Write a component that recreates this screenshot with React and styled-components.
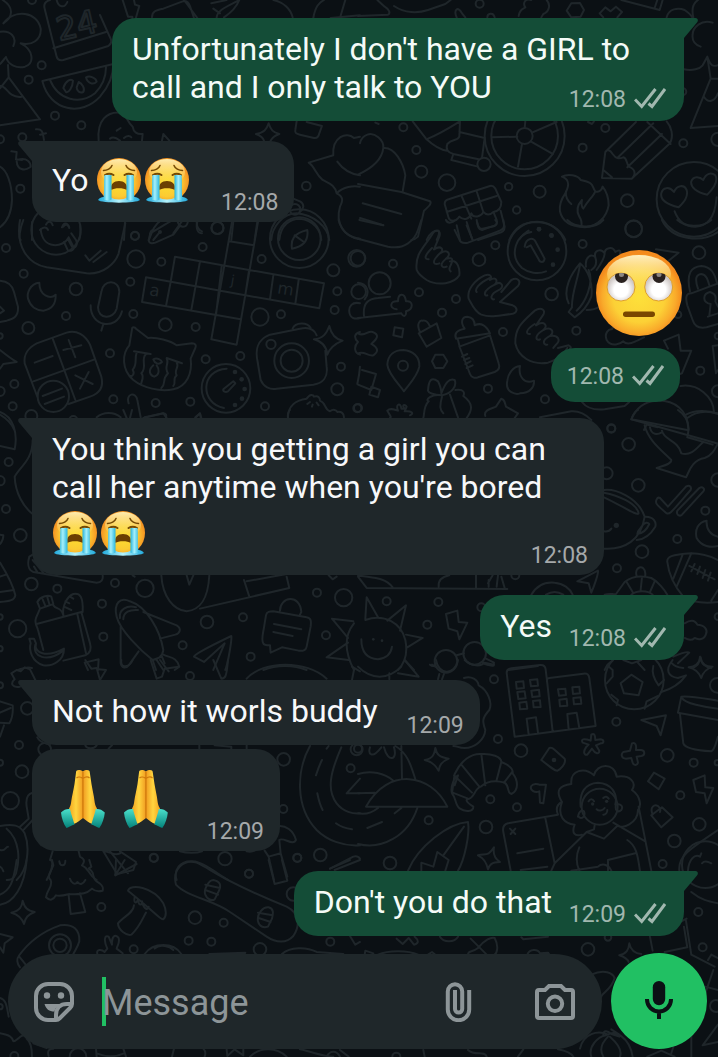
import { useId } from 'react';
import styled, { createGlobalStyle, css } from 'styled-components';

const GlobalStyle = createGlobalStyle`
  *, *::before, *::after {
    box-sizing: border-box;
  }
  body {
    margin: 0;
    background-color: #0b1014;
    font-family: Roboto, 'Liberation Sans', sans-serif;
  }
`;

const Page = styled.main`
  position: relative;
  display: flex;
  flex-direction: column;
  min-height: 100vh;
  overflow: hidden;
  background-color: #0b1014;
`;

const WallpaperSvg = styled.svg`
  position: absolute;
  inset: 0;
  width: 100%;
  height: 100%;
  fill: none;
  stroke: #1f262a;
  stroke-width: 6;
  stroke-linecap: round;
  stroke-linejoin: round;
  text {
    font-family: 'DejaVu Sans', sans-serif;
  }
`;

const Thread = styled.section`
  position: relative;
  flex: 1;
  display: flex;
  flex-direction: column;
  gap: 20px;
  padding: 18px 34px 0 32px;
`;

const Group = styled.div`
  display: flex;
  flex-direction: column;
  align-items: ${({ $out }) => ($out ? 'flex-end' : 'flex-start')};
  gap: ${({ $gap }) => $gap || 4}px;
  width: 100%;
`;

const BubbleBox = styled.article`
  position: relative;
  max-width: calc(100% - 80px);
  padding: 12px 16px 5px 20px;
  border-radius: 24px;
  background-color: #1f272a;
  color: #f7f8fa;

  ${({ $out }) =>
    $out &&
    css`
      padding-right: 18px;
      padding-bottom: 7px;
      background-color: #144d37;
      color: #f4fbf7;
    `}
  ${({ $tail, $out }) => $tail && ($out ? 'border-top-right-radius: 0;' : 'border-top-left-radius: 0;')}
`;

const TailSvg = styled.svg`
  position: absolute;
  top: 0;
  width: 15px;
  height: 22px;
  ${({ $out }) =>
    $out ? 'right: -14px; fill: #144d37;' : 'left: -14px; fill: #1f272a; transform: scaleX(-1);'}
`;

const Text = styled.p`
  margin: 0;
  font-size: 32px;
  line-height: 38px;
`;

// keeps room on the last line for the time stamp
const Spacer = styled.span`
  display: inline-block;
  width: ${({ $out }) => ($out ? 114 : 86)}px;
  height: 1px;
`;

const Meta = styled.footer`
  display: flex;
  justify-content: flex-end;
  align-items: center;
  gap: 8px;
  margin-top: ${({ $out }) => ($out ? -20 : -18)}px;
  font-size: 23px;
  line-height: 28px;
  color: ${({ $out }) => ($out ? '#a1b8af' : '#a5a9aa')};
`;

const Pill = styled.div`
  margin-right: 4px;
  padding: 35px 16px 11px;
  border-radius: 24px;
  background-color: #144d37;
`;

const CheckSvg = styled.svg`
  width: 32px;
  height: 24px;
  fill: none;
  stroke: currentColor;
  stroke-width: 3;
`;

const InlineEmoji = styled.svg`
  width: 48px;
  height: 54px;
  vertical-align: -16px;
`;

const HandsEmoji = styled.svg`
  width: 63px;
  height: 75px;
  vertical-align: -24px;
`;

const BigEmoji = styled.svg`
  width: 90px;
  height: 98px;
`;

const Composer = styled.form`
  position: relative;
  display: flex;
  align-items: flex-end;
  gap: 9px;
  padding: 15px 11px 8px 8px;
`;

const Field = styled.div`
  flex: 1;
  min-width: 0;
  display: flex;
  align-items: center;
  height: 95px;
  padding: 0 27px 0 26px;
  border-radius: 48px;
  background-color: #1f272a;
`;

const MessageInput = styled.input`
  flex: 1;
  min-width: 0;
  height: 49px;
  margin: 0 28px;
  padding: 2px 0 0;
  border: 0;
  outline: 0;
  background: linear-gradient(#21c063, #21c063) left center / 4px 49px no-repeat;
  color: #f7f8fa;
  font-family: inherit;
  font-size: 36px;
  line-height: 42px;
  &::placeholder {
    color: #8d9598;
    opacity: 1;
  }
`;

const Actions = styled.div`
  display: flex;
  gap: 57px;
`;

const IconButton = styled.button`
  display: flex;
  padding: 0;
  border: 0;
  background: none;
  color: #8d9598;
  cursor: pointer;
  svg {
    width: 40px;
    height: 40px;
    fill: none;
    stroke: currentColor;
    stroke-width: 4;
  }
`;

const MicButton = styled(IconButton)`
  justify-content: center;
  align-items: center;
  width: 96px;
  height: 96px;
  border-radius: 50%;
  background-color: #21c063;
  color: #0b1014;
`;

// every tile is drawn at three times its size on the page
const tiles = [
  {
    x: 0,
    y: 0,
    dots: [[125, 196, 12], [86, 239, 12], [165, 347, 12], [244, 376, 12], [67, 412, 12], [61, 566, 12], [405, 708, 12], [0, 418, 12], [919, 558, 13], [885, 628, 16], [652, 684, 18], [96, 0, 12], [168, 690, 74]],
    paths: [
      'M8 0C40 20 42 50 10 70C45 25 112 35 122 85C125 120 95 138 62 130C100 148 105 190 75 200C50 206 25 195 18 172M0 95C32 90 52 112 40 138',
      'M18 172C10 180 5 188 0 192M24 195L26 232L120 358L0 376M26 232L0 265M0 258C15 256 20 275 35 284C45 290 55 292 65 290',
      'M170 0C175 22 194 26 202 6M150 0C136 4 130 12 134 26L170 170C173 180 182 182 190 180L325 138C334 132 336 122 330 112L300 45M160 145L318 96',
      'M127 243C150 335 245 350 300 290C330 255 340 222 340 192ZM150 240C175 302 240 315 285 280C310 255 318 230 318 202',
      'M190 264C196 242 214 234 219 242C218 262 206 280 198 276ZM236 246C246 250 256 266 250 276C240 280 230 274 230 262ZM258 232C270 226 288 234 290 245C280 256 262 250 258 232Z',
      'M368 0L384 50H397L400 80L418 18L405 14L402 0',
      'M456 52C456 34 468 30 490 26L548 4C560 0 566 8 570 18L582 54M552 0L592 54M634 10L680 0M650 52C652 30 680 20 718 0C708 26 690 40 672 52M640 26L660 40',
      'M820 0C850 6 872 26 878 52M940 54C946 18 958 8 972 0M992 54L1080 46M1020 54L1036 0',
      'M296 422C290 360 322 334 362 338C380 342 378 362 398 380C400 396 412 404 428 402L426 422M330 416C340 408 350 414 360 422M372 414C380 406 390 406 394 412M350 392L362 384',
      'M486 422L490 402L508 422M768 402C792 398 800 388 806 370C812 390 820 398 838 402C820 408 815 416 812 422M768 402C785 408 790 414 792 422',
      'M890 364L886 390C884 400 890 402 900 404L942 414C952 416 956 410 958 400L966 378L920 366',
      'M1000 466C996 410 1040 394 1062 414L1080 410M1000 466L926 488C945 500 945 520 968 540C985 550 1004 552 1010 580M1010 580C1030 560 1060 556 1080 560M1010 580C1030 590 1030 600 1020 620C1006 670 1030 710 1080 718M1012 485C1030 510 1050 522 1080 526',
      'M0 500C20 510 36 550 36 600C34 650 16 670 0 682M34 454L50 456L48 478L66 480M60 478C80 474 92 486 92 500M50 484C52 510 74 514 90 502M108 388C130 386 128 400 132 420M120 404L138 400',
      'M70 660C58 690 56 720 62 720M96 666V720M240 674C244 700 240 712 238 718M120 690C130 680 140 680 144 690M190 680C196 672 206 672 208 684',
      'M375 665L372 720M450 700C470 690 500 670 510 665M446 720C452 700 450 690 460 690M545 665L520 700M592 665C586 690 596 700 606 700M700 665L694 720M772 665L764 720M814 720C816 680 850 640 890 640C940 644 984 680 988 720M838 720C842 676 870 656 900 656C940 660 962 690 964 720M880 596L900 604C916 612 910 630 900 636',
    ],
    texts: [{ at: 'translate(178 122) rotate(-13)', size: 96, value: '24', outline: true }],
  },
  {
    x: 358,
    y: 0,
    dots: [[365, 11, 12], [136, 382, 12], [175, 450, 12], [190, 515, 18], [267, 548, 25], [452, 560, 11], [545, 575, 18], [476, 630, 11], [674, 443, 12], [742, 384, 12], [808, 602, 19], [827, 687, 25], [976, 430, 12], [1080, 418, 20], [500, 408, 24], [500, 408, 100], [500, 408, 120], [378, 493, 20], [1008, 598, 112], [975, 275, 10]],
    paths: [
      'M0 48L90 44C98 40 94 28 80 20L58 0M108 18C140 40 180 40 210 30L262 12L278 0M52 368L62 372',
      'M296 52C286 30 300 16 312 40L322 52M388 52C388 40 406 36 410 52M482 48C484 28 496 26 502 22C492 8 504 -6 520 0M566 0C580 16 572 36 556 42C552 48 550 52 550 52M640 10L666 9L678 30L668 50L640 52L626 32Z',
      'M725 40L742 22L758 34L774 20L792 36L778 52M725 40L736 52M790 0L905 30L914 0M890 24L898 0M926 52C932 26 960 22 980 30C992 38 1000 46 1004 54M1006 52C1000 26 1008 8 1020 0M1064 68C1030 56 1004 84 1004 104C1002 120 1010 134 1028 140M978 208C1004 214 1026 206 1034 196L1048 170C1058 200 1066 200 1080 196M1048 170L1058 236H1080M1058 236L998 384L1080 378M1038 290C1050 310 1070 306 1080 280',
      'M164 364L204 416C230 440 250 450 268 452M210 416C250 400 280 380 306 364M306 364L304 410C298 424 282 416 268 432C262 448 270 458 286 462M304 396L380 414M286 462L280 480L360 500M286 462L362 478M380 414L372 474',
      'M402 412L478 410M500 384L502 364M522 398L596 366M518 424L584 462M492 432L480 500',
      'M690 366L702 372L708 364M742 456L834 366M778 474L886 370M808 502L912 402M834 524L936 430C948 406 940 380 926 364M868 366L938 432M742 456L732 534L822 536L834 524M742 456C746 448 756 448 764 462C774 476 782 478 796 472C806 474 804 484 812 500C830 506 836 520 822 536M736 510L762 532',
      'M0 524C40 506 72 480 76 444C78 420 50 396 28 404C16 408 8 420 6 430M76 444C110 440 136 490 142 526L134 574',
      'M0 552L130 576L216 604C222 610 214 618 198 632L180 710C170 720 164 720 160 720M14 610L130 642M6 654L76 676M206 720C214 700 230 690 242 692C246 700 240 712 236 720',
      'M260 612C260 604 264 600 272 598L396 558C404 556 408 560 412 566L430 606C430 624 420 634 406 636C396 646 384 646 376 636C370 650 346 656 340 640C336 656 318 664 304 650C292 668 276 664 272 654ZM266 636L416 588M310 586L340 656M356 574L376 636M296 676L306 720M326 666L342 716M408 640L416 660C420 674 412 678 400 680L372 690C362 690 360 680 358 668M428 632L440 680C440 694 430 698 420 700L360 720',
      'M612 530C640 540 630 564 622 580C608 600 604 620 606 634C612 664 640 680 680 682C720 680 746 650 752 616C752 590 742 570 734 560C730 574 720 578 712 574C700 560 712 548 668 540C660 526 630 520 612 530ZM640 612C626 600 622 590 624 574M712 574C706 590 690 600 676 626C672 622 670 610 672 600C654 620 656 636 664 650C670 658 672 668 670 680',
      'M962 622C930 614 906 600 910 580C914 562 934 558 948 576C956 556 978 552 986 570C992 590 978 606 962 622ZM1048 584C1018 578 996 562 1000 544C1006 528 1024 528 1036 540C1044 520 1060 516 1072 526C1080 540 1070 562 1048 584ZM950 634C964 672 990 680 1012 680C1046 678 1070 660 1076 592',
      'M454 720C470 680 500 666 536 666C580 668 610 690 622 720M484 718C496 700 504 698 512 692',
    ],
    fills: [[543, 688, 7], [580, 706, 7]],
  },
  {
    x: 0,
    y: 220,
    dots: [[18, 84, 12], [71, 161, 12], [405, 47, 12], [408, 117, 26], [484, 125, 12], [608, 81, 12], [653, 24, 18], [391, 185, 12], [228, 207, 19], [198, 288, 12], [85, 324, 18], [400, 282, 12], [496, 314, 19], [587, 321, 12], [785, 117, 12], [780, 291, 26], [843, 283, 12], [1000, 151, 18], [1012, 214, 12], [1004, 270, 12], [1070, 115, 25], [1076, 215, 22], [330, 400, 12], [43, 492, 12], [38, 559, 12], [340, 538, 12], [467, 549, 12], [571, 545, 12], [617, 418, 12], [721, 408, 12], [795, 559, 12], [1023, 440, 12], [1012, 508, 18], [1072, 565, 12], [0, 514, 14], [94, 588, 18], [678, 505, 73], [160, 529, 47], [875, 422, 52], [875, 422, 33], [813, 373, 14], [898, 56, 88], [898, 56, 64], [0, 348, 8], [220, 600, 12]],
    paths: [
      'M60 0C46 80 84 132 140 142L260 160C310 164 346 130 356 100L376 10M122 28C128 90 190 84 206 52M206 52L222 84C232 78 232 70 228 60L214 40M192 66L204 92C214 94 220 88 222 84M204 58L216 80M138 14C144 2 154 2 158 16M186 22C192 6 202 8 206 20',
      'M256 106L268 122L302 92M280 126L320 96',
      'M446 62C458 30 462 16 484 0M446 62C448 72 460 70 466 68L520 44L538 20M460 60L478 38M532 0C536 26 560 26 564 4M590 6C590 20 596 30 606 34',
      'M118 188C90 190 80 220 84 236C92 262 112 272 130 272C156 268 168 250 167 224C150 240 118 226 118 188Z',
      'M304 216C308 178 358 176 358 216L350 266C340 300 294 298 294 262ZM272 256C270 320 350 334 366 274M310 312L304 332',
      'M696 6L634 358L710 374L774 6M688 64L762 76M525 110L972 190L958 265L736 226L747 152M525 110L512 186M600 124L574 270M438 172L736 226M438 172L426 246L722 298M512 186L498 258M665 138L648 286M820 166L810 238M896 180L886 252',
      'M878 326C886 306 922 306 932 324M876 86C872 60 880 40 922 30C926 60 910 80 876 86ZM884 46L912 66',
      'M74 430C70 400 90 380 110 370L200 338C230 328 256 346 270 374L304 470C312 500 298 520 270 530L206 552M74 430L102 504L112 530M158 356L226 540M100 484L284 418M104 428L158 408M190 390L244 376M206 360L226 412M226 466L278 492M266 456L240 506M128 528L186 506M134 552L192 530',
      'M396 328C396 320 404 320 410 328L444 354C470 352 510 360 530 376L576 370C586 370 590 376 586 384L572 416C578 460 560 500 520 508C480 516 430 504 400 480C364 450 366 400 388 376ZM402 394L452 402M500 414L546 430M410 398C402 420 414 430 398 450C406 462 396 470 390 468M438 402C420 420 444 440 424 460C434 470 424 484 424 490M500 416C510 430 490 440 504 460C484 480 500 490 484 504M530 428C540 440 520 450 530 466C516 476 530 486 520 498M460 418C472 412 484 420 486 426C476 436 464 430 460 418ZM460 436C444 450 448 466 462 470C480 466 478 446 470 436',
      'M680 446C600 450 600 550 672 564M670 508L700 484L706 490L684 514C676 518 668 514 670 508Z',
      'M774 430C764 390 770 360 810 344L900 326C930 320 944 330 950 346M772 420L782 480C790 500 810 510 830 506L940 494C970 490 984 470 980 440L976 392M942 358C970 356 980 340 988 318C994 344 1006 358 1028 362C1008 370 990 382 982 404C980 380 964 364 942 358Z',
      'M386 550C376 520 408 514 412 540L422 592M434 592L490 580C498 580 500 586 498 592M290 592C310 576 340 574 362 592M586 592L600 580L602 592M864 592C864 556 890 540 920 536C930 520 940 524 942 530C956 526 960 534 960 542C980 550 970 566 990 574C1000 566 1010 570 1012 576C1024 574 1032 580 1032 592M922 552L930 546M938 554L936 560M950 548L956 556',
      'M0 182C30 184 38 200 42 216L54 260C56 290 40 296 20 302L0 306M0 260L12 272L0 280M0 390C20 406 36 418 50 426L10 432L0 446M0 584C20 596 34 610 42 628',
      'M1016 0C1024 30 1046 52 1080 56M1080 250C1056 244 1046 260 1048 276C1050 296 1066 298 1080 294M1080 336C1064 340 1060 352 1074 366C1060 380 1064 400 1080 404M1080 440C1078 470 1072 490 1072 492',
    ],
    fills: [[705, 456, 7], [725, 478, 7], [734, 507, 7], [726, 536, 7], [705, 555, 7], [480, 36, 6]],
    texts: [
      { at: 'translate(446 226) rotate(9)', size: 50, value: 'a' },
      { at: 'translate(690 194) rotate(9)', size: 42, value: 'j' },
      { at: 'translate(830 220) rotate(9)', size: 50, value: 'm' },
    ],
  },
  {
    x: 358,
    y: 220,
    dots: [[0, 115, 22], [105, 131, 12], [412, 76, 12], [363, 119, 19], [183, 217, 12], [65, 190, 33], [294, 237, 12], [252, 278, 12], [435, 336, 12], [674, 72, 12], [827, 26, 25], [1023, 98, 19], [581, 222, 19], [655, 332, 12], [390, 506, 12], [561, 538, 12], [1027, 452, 12], [760, 626, 12], [1080, 514, 18], [1080, 348, 10], [135, 437, 15], [537, 93, 88], [0, 564, 12], [960, 284, 10]],
    paths: [
      'M0 56L90 80C140 90 170 60 180 30L190 0M4 0L76 16M0 188C30 190 36 220 20 238M0 294L130 280C136 292 146 290 144 274C168 268 166 240 144 244C140 216 120 220 120 244C96 240 92 266 116 268M18 288C14 250 30 236 60 234L96 230',
      'M176 150C170 100 200 80 222 44C232 24 250 32 244 50L228 88M222 84C196 110 200 118 212 118M228 88C250 74 260 90 246 100C214 130 232 136 244 130M246 100C270 84 282 104 264 116C240 136 254 146 266 140M264 116C290 110 284 124 276 140C272 150 278 154 278 154M276 124C300 116 306 150 304 166C290 190 240 200 206 180C190 170 180 160 176 150',
      'M332 236C326 210 350 180 380 166C396 160 404 170 396 180M396 174C360 190 350 210 356 216M396 180C416 168 420 184 410 194C370 214 380 230 388 226M410 194C430 180 440 200 426 208C390 224 400 240 408 238M430 216L460 180C480 170 490 184 480 198L426 246L464 256C482 264 478 280 460 282C420 286 400 294 370 284C350 276 340 250 332 236',
      'M472 370C470 320 500 300 530 272C550 260 564 270 556 284L534 316M530 312C500 330 504 344 516 342M534 316C560 300 572 318 556 330C524 350 536 364 546 358M556 330C580 318 592 336 576 348C546 364 560 376 568 374M576 348C600 344 610 360 594 374L586 384M600 384L632 376C640 380 640 384 636 386M472 370C480 410 520 436 570 428C600 420 620 400 628 384',
      'M294 356C288 342 296 330 320 326C306 306 312 290 328 290C346 292 350 306 350 316C370 306 386 318 396 340ZM304 380L396 346M300 360L306 384L336 462C340 472 350 476 360 472L410 456C424 450 426 440 422 430L396 346M312 410L328 402M318 420L334 414M322 432L338 424M326 444L344 436',
      'M182 340L236 310L250 354L206 380ZM186 336C174 310 186 300 194 302C204 300 212 310 216 320M110 322L136 326L132 352L106 346ZM0 340C20 352 30 330 44 336C64 344 60 354 40 372C64 386 60 396 46 406C30 410 20 392 0 400M12 450L54 462L40 510L0 494M40 500L66 510L60 532L34 524Z',
      'M138 514C120 490 90 460 88 434C90 404 110 390 136 390C164 392 186 410 184 440C178 470 150 496 138 514ZM222 424L232 404L256 404L268 424L256 444H232Z',
      'M264 0C270 14 286 6 290 2M290 30L304 58C308 70 320 70 330 68L420 34C440 28 440 20 436 0M326 16L344 60M356 0C360 30 370 28 384 24L410 18C420 10 416 4 412 0M628 0C650 22 710 30 736 0M912 0C940 60 1030 70 1080 36M958 0C980 20 1030 26 1060 0',
      'M520 36C476 40 450 104 492 144C510 158 540 164 564 154M500 80C504 50 530 54 532 64L560 116C558 130 546 128 542 118L518 76L506 82',
      'M210 512C212 480 220 470 240 484C244 492 250 510 250 520C262 490 272 474 290 480C298 500 280 520 252 526C230 524 212 520 210 512ZM252 526C220 520 200 540 212 544C196 560 200 580 196 594M252 530C244 560 246 570 256 580M276 524L300 592M292 510C320 506 320 520 316 528C346 550 344 570 326 594M88 572C96 564 106 568 120 572C112 552 128 546 130 566L140 566C130 556 140 550 146 560L140 574C160 572 170 580 156 586M88 572C100 592 100 592 96 594M382 588C376 570 400 566 414 560L430 536C440 540 440 546 444 560L480 580L470 594',
      'M632 250C612 210 640 160 666 130C690 150 706 190 700 230C688 262 668 280 650 292L632 276L642 262M666 134C660 180 640 220 642 262M692 150C710 190 680 250 656 272M684 140C680 110 700 100 712 112C706 90 730 84 740 100C740 84 764 76 772 96C784 88 790 92 786 100M700 150C716 140 716 124 712 112M716 150C730 130 740 110 740 100M686 270C720 270 744 250 740 240',
      'M448 482C440 520 476 524 486 520C516 520 530 500 528 482C500 494 480 470 486 438C466 440 450 460 448 482Z',
      'M894 88L962 98L930 124M1000 220C980 220 984 240 988 256L1004 300C1010 320 1026 326 1046 322L1080 312M1000 220L1080 190M996 214C984 160 1000 140 1030 138C1060 140 1070 160 1078 192M1020 206C1010 176 1014 164 1030 162C1046 164 1050 180 1054 196M1050 290L1080 280M1054 288L1058 252C1030 246 1036 220 1056 216C1070 220 1076 230 1072 244L1080 260',
      'M746 360C738 340 752 326 762 328C764 316 780 318 786 326M746 360C760 384 790 370 796 364C810 380 830 364 838 362L858 352M918 362L962 344L968 392L1000 392L972 460L966 462M918 362L930 386M1064 378L1080 376M1064 378L1074 460L1080 450',
      'M672 546C690 570 720 570 740 568L800 558L814 546M546 592L640 574C670 572 690 590 700 600M820 598C836 560 860 544 896 542M820 598L988 630M896 542C950 540 990 570 992 630M968 498C1020 490 1066 530 1068 576M988 594C1010 576 1040 570 1080 580M858 630L866 614L900 622',
    ],
    fills: [[543, 27, 7], [581, 47, 7], [599, 89, 7], [585, 134, 7]],
  },
  {
    x: 0,
    y: 410,
    dots: [[26, 156, 12], [0, 212, 14], [18, 297, 12], [61, 376, 19], [94, 522, 19], [172, 536, 12], [345, 519, 12], [435, 535, 26], [306, 581, 12], [53, 656, 26], [310, 680, 12], [621, 636, 19], [729, 622, 12], [548, 706, 12], [752, 740, 12], [951, 548, 12], [1031, 563, 26], [978, 676, 12], [0, 621, 8], [0, 716, 8]],
    paths: [
      'M0 6C40 20 54 70 44 118L0 108M98 90C98 150 60 170 44 200C46 250 70 290 98 312M0 374L10 376C10 390 6 396 0 402M88 440C82 460 84 480 100 486L290 518C304 518 310 510 308 496M88 440L98 434M112 486L102 470M132 490L98 450M0 458C20 490 40 530 46 556C44 570 30 574 0 576M0 500L18 494M0 546L42 540',
      'M112 576L120 596L160 582L154 560C144 554 120 560 112 576ZM128 568L136 588M142 562L148 582M120 596L108 624C102 640 112 650 114 660L130 720M160 586C170 600 184 590 190 616M110 642L244 606L270 700C276 720 270 730 256 736L190 752M232 612L258 730M190 616C186 590 200 560 220 552C240 548 250 560 248 606M196 574L208 580M192 590L214 600M210 560L220 566',
      'M88 686L102 686L108 700C100 730 140 744 192 716C192 750 160 770 130 766C96 756 86 720 92 700ZM106 704C96 740 140 760 190 722',
      'M350 620C340 580 360 560 390 574C440 590 480 660 490 720C488 740 470 750 458 750C420 720 360 660 350 620ZM360 624C356 600 380 584 408 592M370 628C370 606 390 598 414 600M430 606L530 646C546 656 540 670 526 674L480 686M362 650L362 760C366 776 378 776 386 766L416 724M458 750L468 780M458 750L486 740L494 760M490 734C510 744 530 740 538 770L524 780M470 750L490 780M254 758L296 748L294 780M254 758L264 780M54 780C66 776 76 770 96 774',
      'M484 496C488 560 520 600 560 604C600 600 624 570 628 496M600 596L868 534L860 500M732 510L748 560M740 514L860 492M560 496L568 524L580 496M398 496L404 500M986 496L998 508L1010 500',
      'M582 740C584 730 690 680 694 678C696 690 684 760 676 780M582 740L612 756L674 700L640 780M790 700C782 690 790 670 794 640L798 616C800 604 810 604 820 604L920 622C934 624 934 634 932 650L920 710C918 722 908 724 896 722L846 712L812 728L810 706C800 706 792 706 790 700ZM840 602C840 560 900 550 904 606L900 614M822 642L904 658M820 666L878 678',
      'M996 626L1060 634M996 626L1044 684M980 742L1044 698M980 742L1046 750M1062 640C1030 680 1036 730 1062 780M790 780C830 764 880 764 920 780M390 24L396 0M430 24L490 10L500 24M864 24C862 10 868 0 870 0M370 0L380 24M586 24L600 10L604 24',
    ],
  },
  {
    x: 358,
    y: 410,
    dots: [[760, 55, 12], [812, 103, 19], [746, 190, 18], [841, 226, 19], [1042, 302, 12], [958, 387, 12], [852, 425, 19], [777, 475, 12], [86, 574, 12], [241, 576, 12], [208, 644, 12], [370, 592, 12], [472, 496, 12], [1080, 210, 20], [1080, 620, 10], [350, 730, 34], [264, 754, 34]],
    paths: [
      'M820 28L1076 100M820 28C826 10 836 0 840 0M960 0C990 20 996 50 988 82M984 14C1010 0 1050 0 1080 12M860 46C870 90 910 120 940 150C940 164 910 168 896 174L984 202C992 190 1000 150 1040 144C1060 138 1070 120 1080 100M876 52C880 76 900 74 910 68M912 62C916 90 960 90 970 130M970 130C1000 140 1020 110 1036 96M988 82L1064 104',
      'M738 240C770 236 840 260 860 320C850 390 800 420 738 416M738 262C790 286 840 320 842 310C836 280 780 256 738 248M864 320C886 320 896 336 892 350C880 370 860 388 836 390M852 348C860 336 870 336 874 342C866 360 856 370 838 372C838 360 846 360 852 348ZM738 364C748 366 756 362 760 356',
      'M896 268C890 280 896 284 926 310C936 314 940 306 998 240C1002 230 994 224 984 230L930 290L906 264C902 262 898 264 896 268ZM960 300L1024 234C1034 228 1042 236 1036 244L972 314C962 322 952 310 960 300Z',
      'M1046 332C1020 336 1010 360 1016 384C1030 410 1060 414 1080 408M1046 332C1044 360 1060 376 1080 380M928 456C926 440 940 434 1000 430C1030 430 1060 440 1080 450M928 456C932 490 950 530 976 560C1000 576 1030 582 1080 576M974 434L946 506M1000 430L956 530M994 468L1070 508M1010 462L1000 484M1026 470L1018 492M1042 480L1034 504M1058 488L1050 512M1080 540L1060 572',
      'M658 514L720 482C722 490 708 530 700 548L692 520ZM520 554C540 520 570 516 590 518C616 520 636 536 644 554M564 554C580 544 600 544 616 554M740 554C756 550 766 554 774 552L800 516C820 500 850 496 880 504C900 514 920 540 928 554M806 516L824 546M852 502L848 540M890 514L876 546M820 554C836 540 870 540 884 554M836 500C826 470 860 460 862 490L862 500',
      'M0 500L26 534L448 537M0 496C40 504 80 500 104 532M242 530C240 510 254 500 274 496M354 496V534M392 510V530M416 530L420 496M404 496L390 520M440 534L430 500',
      'M22 626L26 562L60 622M88 632L144 586L126 662M144 674L194 684L148 712M140 750L168 780M22 630C80 610 130 640 142 690C150 730 140 760 120 780M10 688C10 720 20 746 60 748C90 744 100 726 102 710M264 612L298 602L302 636L328 638L304 688L298 664L272 656ZM296 736L318 730M384 746L408 758C408 768 400 768 380 762M222 764L232 770M452 780L540 768',
      'M980 640C996 630 1010 628 1018 644C1040 644 1050 660 1044 672C1040 690 1020 690 1010 684C1000 694 990 690 980 684M946 740C970 730 990 724 994 728L960 760M1026 740C1024 764 1016 770 1000 774M1026 740C1032 764 1040 770 1060 774M740 780C746 766 756 756 764 752M838 756L860 780',
    ],
    fills: [[775, 346, 8], [46, 688, 4], [72, 692, 4]],
  },
  {
    x: 0,
    y: 660,
    dots: [[82, 145, 19], [570, 48, 12], [57, 255, 12], [66, 335, 19], [31, 422, 26], [0, 308, 9], [0, 76, 9], [134, 268, 19], [851, 298, 19], [850, 447, 12], [1052, 325, 12], [461, 593, 12], [675, 596, 20], [747, 641, 12], [892, 593, 12], [961, 585, 19], [1070, 268, 18]],
    paths: [
      'M34 40L50 30L62 34L74 22L90 28L106 60M34 40L44 58C30 70 36 84 60 80M140 60L146 68L150 60M256 0L274 26L290 24L300 60L318 30L296 28M364 0C360 30 390 20 398 0M452 0L470 56L486 50L494 26L536 20M480 0L506 34M640 0L664 56C676 56 680 50 684 0M740 56C790 0 920 0 980 56M1056 20L1080 34M1062 30L1056 60',
      'M0 124L38 136C40 160 34 180 28 190L0 188M0 158L32 144M12 196L0 230M112 232C120 250 140 250 150 254M256 256C260 266 280 270 290 256M326 266L336 256M598 256V266M644 256L694 260V266M740 256V266',
      'M930 258C890 330 884 440 950 510C980 540 1030 560 1080 556M1024 262C990 340 980 390 1010 430C1030 456 1060 462 1080 460M966 300C956 320 950 340 948 346M952 400C956 420 960 436 968 450M1008 490C1024 502 1040 506 1056 508M980 266L986 258M1040 400L1080 356M1040 400H1080',
      'M80 440C76 410 88 400 98 398M80 440L86 476L60 500M98 480L72 508M0 498C40 490 60 496 74 520C90 560 84 630 50 660M20 506C60 540 60 600 48 640C40 660 30 660 20 660M0 570C16 576 16 560 24 560M0 620C8 624 8 630 10 634M158 574L150 600C160 600 158 620 150 640L140 660M236 574L240 590C260 600 250 610 246 616C270 626 260 640 290 660M178 604C180 620 196 620 196 602M310 574L350 640M310 574C330 572 340 590 360 580M360 574L408 606L400 630L346 644M330 574L384 640',
      'M530 660C520 630 540 600 580 604C610 606 650 640 684 660M794 572L806 590L842 580L838 540C850 530 880 560 888 540C880 510 856 496 836 498M806 590L822 660M842 580L862 650M990 626L1060 590C1074 586 1080 596 1080 596M1004 630L1080 600M110 534L124 556M540 574C560 580 590 580 606 574M740 574C750 576 760 574 764 572',
    ],
  },
  {
    x: 358,
    y: 660,
    dots: [[408, 58, 12], [420, 237, 12], [489, 272, 19], [397, 418, 12], [477, 442, 12], [212, 481, 12], [384, 501, 19], [96, 609, 19], [775, 185, 12], [928, 286, 19], [1007, 308, 12], [967, 406, 12], [1024, 493, 19], [949, 543, 19], [914, 612, 12], [1078, 76, 22], [829, 60, 88], [1078, 308, 8], [725, 440, 54], [0, 266, 12]],
    paths: [
      'M0 20C40 60 90 60 130 20M94 40V58M120 40L182 50L140 0M216 14C226 22 232 16 232 10M320 0C340 20 370 20 380 8L408 14C408 22 390 14 372 6M234 0C240 44 290 50 300 0M244 42L240 58M258 42L252 58M318 54C340 46 360 60 362 76C390 90 404 130 394 150C370 176 374 186 382 210C380 240 350 264 320 264C300 264 300 258 286 258',
      'M446 38L470 230L713 198L694 54C692 40 684 40 676 41L574 54C566 54 566 60 568 70L584 214M446 38C446 28 454 26 460 25L546 15C556 14 562 20 563 28L568 70M474 66L496 64L498 84L476 86ZM516 60L538 58L540 77L519 79ZM478 96L500 94L503 115L481 117ZM520 92L543 89L545 109L523 111ZM484 128L505 125L508 146L486 148ZM525 123L546 121L548 141L527 142ZM512 224L506 176L534 172L540 218M600 88L622 86L624 105L603 107ZM643 82L664 80L666 100L645 102ZM604 119L626 116L628 137L606 139ZM646 114L668 112L670 131L648 133ZM632 208L628 162L656 158L664 204',
      'M788 70L820 44L854 66L842 106L798 100ZM796 0L822 10L850 0M748 16L764 30V50L746 70M886 18C880 40 890 60 902 76L918 60M760 104L780 120L776 136M860 146L866 124L900 108',
      'M944 0C920 30 930 50 960 54L984 46C960 80 930 90 910 96M976 24C960 22 950 20 942 10M992 22C1020 20 1026 0 1028 -8C1030 10 1040 20 1064 20C1046 26 1034 40 1030 54C1022 36 1010 26 992 22ZM850 180L924 166L908 226L896 198Z',
      'M970 110L960 158L1080 180M970 110C1000 106 1060 120 1080 122M972 114C980 130 1040 142 1080 146M966 162L976 250C980 262 1000 270 1060 274C1070 270 1074 250 1080 230',
      'M700 224C708 218 712 224 712 240L728 238C740 240 738 250 728 250L714 256L724 272C724 284 712 282 702 266L688 284C676 286 676 274 684 262L692 254L674 248C668 238 676 234 698 242ZM822 250C832 246 836 254 834 270L850 270C862 272 862 286 850 288L836 290L840 308C838 318 826 316 824 308L820 294L804 296C790 296 788 282 796 276L816 272Z',
      'M550 300L574 264C580 262 584 264 588 268L620 296C626 310 606 330 598 332C590 332 580 324 550 300ZM870 364L888 338L920 356L902 388ZM1006 360L1040 346L1042 382L1066 384L1046 430L1040 400L1014 396ZM880 466L912 442L944 472L910 502ZM884 464C874 440 890 432 900 438C910 446 908 450 906 456M544 374L564 374L556 430L546 428L544 394C530 400 514 390 520 378C526 370 540 372 544 374',
      'M282 400C276 380 290 350 300 346L290 376M290 342C310 300 340 280 370 282C400 280 430 290 430 306C456 316 466 326 464 340C480 360 484 390 460 402C446 400 456 380 440 368C420 362 390 360 368 380C350 386 350 410 334 416C320 418 324 426 346 440C346 456 320 456 306 446C290 436 296 416 282 400ZM312 316L364 380M370 282L382 376M430 306L416 360M464 334L438 368M288 346L342 398M284 398L330 416',
      'M200 300C226 296 230 280 232 264C236 284 244 292 272 296C250 306 244 316 242 332C232 314 220 304 200 300ZM360 586C384 580 390 590 408 562C404 584 410 596 426 606C400 606 394 616 390 628C386 606 376 594 360 586Z',
      'M24 440L268 440C220 340 90 320 24 440ZM0 400L50 398M0 342C40 330 80 340 106 362M130 258L132 356M112 258C150 280 160 320 172 358M36 262C30 280 40 300 70 262M78 262C90 310 120 300 108 262M0 460C20 464 40 460 60 444M178 444C150 530 70 570 0 552M28 504L72 486M110 460L130 444',
      'M150 632C180 560 270 490 330 486C336 520 320 600 300 632M190 632V608L226 620L238 576L272 600L262 632M256 586L318 500',
      'M600 464L450 490C436 494 434 506 436 516L458 632M562 474L590 610L580 632M478 580L556 566M488 630L568 620M456 506L472 522M472 506L458 522M600 464C590 440 604 430 612 426C590 390 606 376 640 372C636 330 680 320 708 346C716 310 770 306 776 350C820 344 836 370 822 390C850 410 850 440 840 450C840 490 790 510 780 496M612 426C596 470 620 490 650 494C640 520 650 530 672 524M668 440C664 400 680 370 720 368C760 370 780 400 772 434M660 470C664 450 672 450 678 454C684 470 670 480 662 470M774 434C790 430 796 440 790 450C780 460 770 450 774 434M710 496L708 508L686 516L738 536L780 496L766 488M686 516L590 610M780 496L862 544M842 440L880 632M808 540C840 560 840 600 846 632M664 562C652 590 654 610 664 632M750 632V600L832 580M640 632L720 620C730 610 750 610 760 632',
      'M692 424C696 416 704 416 708 424M736 414C742 408 748 410 752 416M716 448C724 456 736 450 740 444M736 464C744 464 748 456 748 450M964 632C960 590 990 570 1080 510M990 632C992 600 1010 580 1026 590L1030 580M1032 610C1040 600 1050 604 1060 610',
    ],
    fills: [[588, 300, 7], [704, 432, 5], [746, 424, 5]],
  },
  {
    x: 0,
    y: 860,
    dots: [[747, 41, 12], [304, 141, 12], [585, 173, 19], [671, 188, 12], [566, 242, 12], [634, 245, 12], [401, 268, 12], [780, 268, 19], [880, 102, 20], [991, 245, 12], [43, 588, 12], [180, 256, 33], [180, 256, 20], [234, 590, 25], [462, -6, 12], [892, -6, 12], [0, 440, 8]],
    paths: [
      'M80 0C74 80 40 130 0 134M50 0C40 70 30 90 0 104M156 0L160 16C150 40 140 50 152 60C160 80 140 90 138 112C150 124 160 120 168 106C180 110 200 104 208 102M268 0L274 20L266 26C290 40 270 50 292 66C310 76 310 84 308 92C290 96 280 90 276 86C260 100 250 104 208 102M210 56C214 70 226 76 232 66C240 76 250 72 256 60M206 106L212 162L256 156L240 100M348 0L346 46L410 12M346 46L374 0',
      'M34 158C60 152 66 140 68 122C74 144 82 152 104 156C84 164 76 172 72 192C66 174 56 164 34 158ZM0 222L38 232L14 250L10 278L0 262',
      'M60 322C50 310 50 296 56 288C90 240 140 210 180 196C220 190 240 210 238 244C234 260 226 270 220 282M56 288L82 320M384 92C390 70 460 80 490 130C500 150 500 170 490 178C480 180 470 160 384 92ZM404 112C400 130 410 132 414 118C416 140 428 136 426 124C432 152 446 150 446 140M402 136C400 160 370 170 354 190C354 210 380 228 394 224C420 200 430 170 438 158',
      'M292 282C288 266 306 268 314 276L322 266C310 240 314 224 326 230L336 254C334 230 346 220 356 234C360 250 352 256 350 266L368 280M434 282C460 246 520 246 544 282M464 266C480 250 510 260 520 270M628 282L736 278L732 284M846 282C870 260 920 260 950 276L1030 282',
      'M528 74C516 30 550 -4 590 8C640 30 640 50 860 140C900 160 900 200 880 228C860 250 830 250 800 230L690 156C640 120 560 110 528 74ZM616 104C610 90 626 60 640 60C660 64 664 74 658 90L644 118C634 124 620 116 616 104ZM616 74L660 84M616 90L654 104M774 184C770 160 790 140 806 142C822 146 820 160 816 176L804 200C790 204 778 200 774 184ZM774 158L818 166M776 174L812 186M806 0L824 72L862 62L846 0M990 26L1050 0M1050 228L1066 254L1080 246',
      'M0 414C20 420 20 440 26 470M0 520C30 526 36 530 40 544C50 544 56 530 70 526M80 536C90 544 96 556 96 590M100 550L140 564M146 588C140 570 150 566 160 566M288 566L290 590M370 566L378 590M522 566L516 590M290 580C320 592 350 590 372 580M610 566C620 576 616 584 614 590M680 568L682 588L704 568L730 586V568M750 590C780 560 830 560 860 590M900 568C940 576 970 590 1000 590M1020 570L1046 590M980 590C990 570 1010 570 1020 590',
    ],
  },
  {
    x: 358,
    y: 860,
    dots: [[1021, 156, 12], [690, 268, 19], [1034, 262, 12], [1074, 438, 18], [115, 590, 12], [750, 232, 10], [1042, 14, 70]],
    paths: [
      'M116 236L134 252L152 234L168 254C184 250 182 240 170 230M246 230C256 248 290 248 300 230M338 236L386 284M360 264C380 240 400 230 410 234C424 260 416 280 410 284M60 284C90 270 150 270 180 284M508 284C514 266 540 266 546 280L570 278L574 284M20 284L22 272L46 280M490 232L496 238L570 230M360 264C340 280 330 270 330 284M210 284L222 276L232 284',
      'M784 286C806 280 812 270 814 250C818 270 828 280 850 282M784 286C800 290 810 300 812 306M876 230L884 272M984 182L1000 284M966 186L986 176M978 200L988 262L920 276M1000 284L1070 320M1060 284L1080 294M1060 284L1050 300M970 330C1000 330 1004 350 1012 356M1000 96C1030 120 1050 124 1080 130',
      'M1080 494L1034 556L1080 546M1042 380L1080 390M1066 330L1042 400M700 344C740 326 764 340 770 354C760 390 730 400 730 410',
      'M666 566C676 520 720 510 750 524C770 510 814 530 824 590M700 590C690 560 720 530 744 526M750 530C720 560 730 580 736 590M756 530C790 560 790 580 786 590M736 524C736 508 750 514 760 522L784 530M784 524L760 508M868 590L910 572L950 590M956 470L966 500L940 580M1000 520V590M200 590L196 570M330 570C350 590 380 570 386 590M480 590L496 568M600 568C620 572 640 580 646 590',
    ],
  },
];

function Wallpaper() {
  return (
    <WallpaperSvg viewBox="0 0 718 1057" preserveAspectRatio="xMinYMin slice" aria-hidden="true">
      {tiles.map(({ x, y, dots, paths, fills = [], texts = [] }) => (
        <g key={`${x}-${y}`} transform={`translate(${x} ${y}) scale(0.3333)`}>
          {paths.map((d) => (
            <path key={d} d={d} />
          ))}
          {dots.map(([cx, cy, r]) => (
            <circle key={`${cx}-${cy}-${r}`} cx={cx} cy={cy} r={r} />
          ))}
          {fills.map(([cx, cy, r]) => (
            <circle key={`${cx}-${cy}`} cx={cx} cy={cy} r={r} fill="#1f262a" stroke="none" />
          ))}
          {texts.map(({ at, size, value, outline }) => (
            <text
              key={value}
              transform={at}
              fontSize={size}
              fill={outline ? 'none' : '#1f262a'}
              stroke={outline ? '#1f262a' : 'none'}
            >
              {value}
            </text>
          ))}
        </g>
      ))}
    </WallpaperSvg>
  );
}

function CryingFace() {
  const id = useId();
  return (
    <InlineEmoji viewBox="-1 -5 48 54" role="img" aria-label="Loudly crying face">
      <defs>
        <radialGradient id={`${id}f`} cx="0.5" cy="0.55" r="0.5">
          <stop offset="0" stopColor="#fde030" />
          <stop offset="0.65" stopColor="#fbcb33" />
          <stop offset="1" stopColor="#f59422" />
        </radialGradient>
        <linearGradient id={`${id}h`} x1="0" y1="0" x2="0" y2="1">
          <stop offset="0" stopColor="#fff3b8" stopOpacity="0.95" />
          <stop offset="1" stopColor="#fee070" stopOpacity="0" />
        </linearGradient>
        <linearGradient id={`${id}t`} x1="0" y1="0" x2="1" y2="0">
          <stop offset="0" stopColor="#27b3dc" />
          <stop offset="0.45" stopColor="#a6f0fb" />
          <stop offset="1" stopColor="#29b6de" />
        </linearGradient>
        <linearGradient id={`${id}p`} x1="0" y1="0" x2="1" y2="0">
          <stop offset="0" stopColor="#1fa9dc" />
          <stop offset="0.5" stopColor="#b5f3fc" />
          <stop offset="1" stopColor="#1fa9dc" />
        </linearGradient>
      </defs>
      <circle cx="22" cy="22" r="22" fill={`url(#${id}f)`} />
      <ellipse cx="22" cy="14" rx="18" ry="13" fill={`url(#${id}h)`} />
      <g fill="none" stroke="#754a04" strokeWidth="1.5" strokeLinecap="round">
        <path d="M6.5 12.5C10 12.5 14 10.5 15 7.5" />
        <path d="M37.5 12.5C34 12.5 30 10.5 29 7.5" />
        <path d="M8 17C10.5 15.5 14 15.5 16.5 17" strokeWidth="2" />
        <path d="M27.5 17C30 15.5 33.5 15.5 36 17" strokeWidth="2" />
      </g>
      <path d="M14.5 32C13 26 17 23 22 23C27 23 31 26 29.5 32C27 29.5 17 29.5 14.5 32Z" fill="#6b3f02" />
      <path d="M1 42C3 38.5 9 38 14 39.5C17 42 27 42 30 39.5C35 38 41 38.5 43 42C40 45.5 4 45.5 1 42Z" fill={`url(#${id}p)`} />
      <path d="M7.5 17H14.5V41.5C12 43 8 42.5 6 41.5C8 36 6.5 25 7.5 17Z" fill={`url(#${id}t)`} />
      <path d="M29.5 17H36.5C37.5 25 36 36 38 41.5C36 42.5 32 43 29.5 41.5Z" fill={`url(#${id}t)`} />
    </InlineEmoji>
  );
}

function PrayingHands() {
  const id = useId();
  return (
    <HandsEmoji viewBox="-9 -9 63 75" role="img" aria-label="Folded hands">
      <defs>
        <linearGradient id={`${id}s`} x1="0" y1="0" x2="1" y2="0">
          <stop offset="0" stopColor="#f4a51f" />
          <stop offset="0.25" stopColor="#ffd53f" />
          <stop offset="0.48" stopColor="#f2a023" />
          <stop offset="0.52" stopColor="#f2a023" />
          <stop offset="0.75" stopColor="#ffd53f" />
          <stop offset="1" stopColor="#f4a51f" />
        </linearGradient>
        <linearGradient id={`${id}c`} x1="0" y1="0" x2="0" y2="1">
          <stop offset="0" stopColor="#4be0cb" />
          <stop offset="1" stopColor="#04827a" />
        </linearGradient>
      </defs>
      <path
        d="M15 2.5C15 -0.5 19 -0.5 21.9 1.5C24.8 -0.5 28.8 -0.5 28.8 2.5L30.5 14C31.5 20 33 26 33.5 31C33.8 34 34.5 36 36 38.5L31.5 54C28 53 25 50 22 48C19 50 16 53 12.5 54L8 38.5C9.5 36 10 34 10.3 31C11 26 12.5 20 13.5 14Z"
        fill={`url(#${id}s)`}
      />
      <path d="M21.9 2V48M15.5 8C17 6.5 20 7 21.9 8.5C24 7 27 6.5 28.5 8" fill="none" stroke="#cf790c" strokeWidth="1.3" />
      <path d="M0 42.5C3 39.5 6 38.5 9 39C10 44 12 49 13.5 54.5C10.5 55.5 8 57 5.5 58C2.5 54 0.5 48 0 42.5Z" fill={`url(#${id}c)`} />
      <path d="M43.8 42.5C40.8 39.5 37.8 38.5 34.8 39C33.8 44 31.8 49 30.3 54.5C33.3 55.5 35.8 57 38.3 58C41.3 54 43.3 48 43.8 42.5Z" fill={`url(#${id}c)`} />
    </HandsEmoji>
  );
}

function RollingEyes() {
  return (
    <BigEmoji viewBox="-2 -8 90 98" role="img" aria-label="Face with rolling eyes">
      <defs>
        <radialGradient id="roll-face" cx="0.5" cy="0.54" r="0.5">
          <stop offset="0" stopColor="#fde13a" />
          <stop offset="0.6" stopColor="#fcd136" />
          <stop offset="0.85" stopColor="#f9ab2b" />
          <stop offset="1" stopColor="#f48b1d" />
        </radialGradient>
        <linearGradient id="roll-shine" x1="0" y1="0" x2="0" y2="1">
          <stop offset="0" stopColor="#fff0bf" />
          <stop offset="1" stopColor="#fee36c" stopOpacity="0" />
        </linearGradient>
        <radialGradient id="roll-eye" cx="0.5" cy="0.6" r="0.5">
          <stop offset="0.5" stopColor="#fff" />
          <stop offset="1" stopColor="#cfc8c6" />
        </radialGradient>
        <clipPath id="roll-clip">
          <circle cx="25" cy="37" r="14" />
          <circle cx="62.7" cy="37" r="14" />
        </clipPath>
      </defs>
      <circle cx="43" cy="43" r="43" fill="url(#roll-face)" />
      <ellipse cx="43" cy="24" rx="32" ry="19" fill="url(#roll-shine)" />
      <g fill="url(#roll-eye)" stroke="#e0a02a" strokeWidth="1">
        <circle cx="25" cy="37" r="14" />
        <circle cx="62.7" cy="37" r="14" />
      </g>
      <g clipPath="url(#roll-clip)">
        <circle cx="25.5" cy="26.5" r="6.5" fill="#29211f" />
        <circle cx="63" cy="26.5" r="6.5" fill="#29211f" />
        <circle cx="25.5" cy="24.5" r="2.5" fill="#8b8583" />
        <circle cx="63" cy="24.5" r="2.5" fill="#8b8583" />
      </g>
      <rect x="27" y="61.5" width="32" height="5.5" rx="2.7" fill="#7a4700" />
    </BigEmoji>
  );
}

function Tail({ out }) {
  return (
    <TailSvg $out={out} viewBox="0 0 15 22" aria-hidden="true">
      <path d="M0 0H12.5C15 0 15.6 2.7 14 4.5L1 20V22H0Z" />
    </TailSvg>
  );
}

function Stamp({ time, out }) {
  return (
    <Meta $out={out}>
      <time>{time}</time>
      {out && (
        <CheckSvg viewBox="0 0 32 24" role="img" aria-label="Delivered">
          <path d="M1 11.5L7.7 18.5L21.5 1M14.5 15.5L18 18.5L31 1" />
        </CheckSvg>
      )}
    </Meta>
  );
}

function Bubble({ out = false, tail = true, time, children }) {
  return (
    <BubbleBox $out={out} $tail={tail}>
      {tail && <Tail out={out} />}
      <Text>
        {children}
        <Spacer $out={out} />
      </Text>
      <Stamp time={time} out={out} />
    </BubbleBox>
  );
}

export default function App() {
  return (
    <Page>
      <GlobalStyle />
      <Wallpaper />
      <Thread>
        <Group $out>
          <Bubble out time="12:08">
            Unfortunately I don't have a GIRL to call and I only talk to YOU
          </Bubble>
        </Group>
        <Group>
          <Bubble time="12:08">
            Yo <CryingFace />
            <CryingFace />
          </Bubble>
        </Group>
        <Group $gap={16}>
          <Group as="article" $out $gap={8}>
            <RollingEyes />
            <Pill>
              <Stamp out time="12:08" />
            </Pill>
          </Group>
          <Bubble time="12:08">
            You think you getting a girl you can call her anytime when you're bored <CryingFace />
            <CryingFace />
          </Bubble>
        </Group>
        <Group $out>
          <Bubble out time="12:08">
            Yes
          </Bubble>
        </Group>
        <Group>
          <Bubble time="12:09">Not how it worls buddy</Bubble>
          <Bubble time="12:09" tail={false}>
            <PrayingHands />
            <PrayingHands />
          </Bubble>
        </Group>
        <Group $out>
          <Bubble out time="12:09">
            Don't you do that
          </Bubble>
        </Group>
      </Thread>
      <Composer onSubmit={(e) => e.preventDefault()}>
        <Field>
          <IconButton type="button" aria-label="Stickers">
            <svg viewBox="0 0 40 40">
              <path d="M22 38H14A12 12 0 0 1 2 26V14A12 12 0 0 1 14 2H26A12 12 0 0 1 38 14V22C38 24 37 25 36 26L26 36C25 37 24 38 22 38Z" />
              <path d="M22 37V33C22 26 26 22 33 22H37" />
              <path d="M10.5 22H28C24 23.5 21 26 20.5 29.5C15 29.5 12 27 10.5 22Z" fill="currentColor" stroke="none" />
              <circle cx="13" cy="13.5" r="3.2" fill="currentColor" stroke="none" />
              <circle cx="27" cy="13.5" r="3.2" fill="currentColor" stroke="none" />
            </svg>
          </IconButton>
          <MessageInput type="text" placeholder="Message" aria-label="Message" />
          <Actions>
            <IconButton type="button" aria-label="Attach">
              <svg viewBox="0 0 40 40">
                <path d="M31.2 8V27.5A10.7 10.7 0 0 1 9.8 27.5V9.5A7.2 7.2 0 0 1 24.2 9.5V27A3.6 3.6 0 0 1 17 27V8" />
              </svg>
            </IconButton>
            <IconButton type="button" aria-label="Camera">
              <svg viewBox="0 0 40 40">
                <path d="M4 8H10L14 4H26L30 8H36A2 2 0 0 1 38 10V34A2 2 0 0 1 36 36H4A2 2 0 0 1 2 34V10A2 2 0 0 1 4 8Z" />
                <circle cx="20" cy="21.7" r="7.2" />
              </svg>
            </IconButton>
          </Actions>
        </Field>
        <MicButton type="button" aria-label="Record voice message">
          <svg viewBox="0 0 40 40">
            <rect x="13.8" y="0" width="12.4" height="24.3" rx="6.2" fill="currentColor" stroke="none" />
            <path d="M8 18V18.5A12 12 0 0 0 32 18.5V18M20 30V38" />
          </svg>
        </MicButton>
      </Composer>
    </Page>
  );
}
